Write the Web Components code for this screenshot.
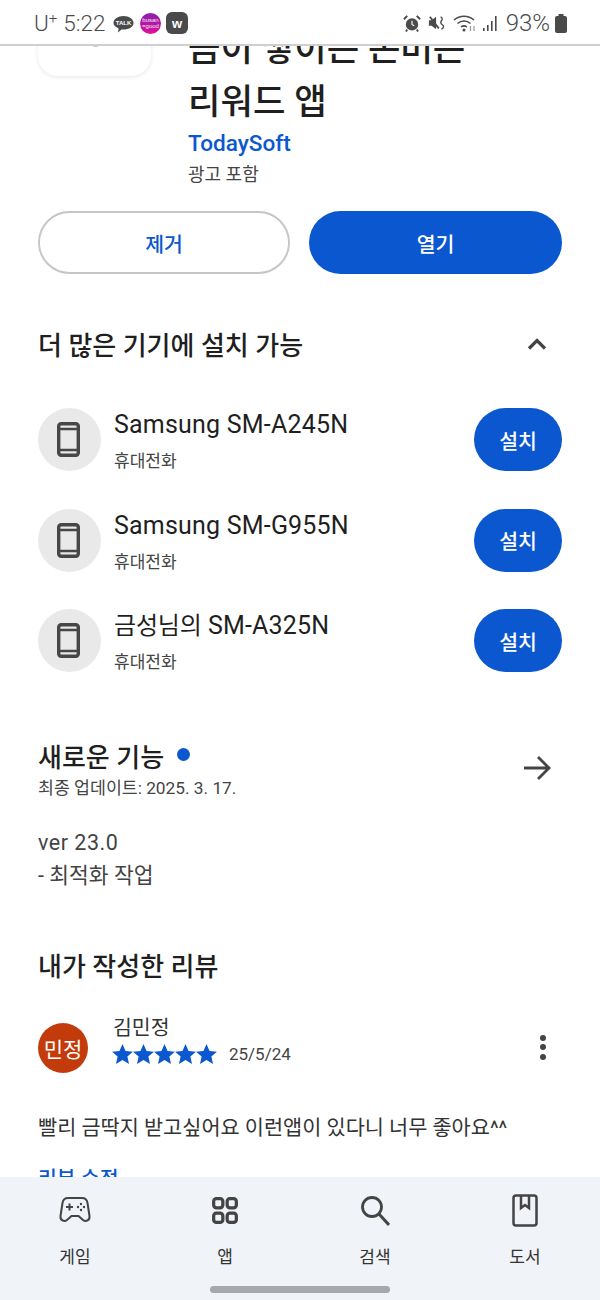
<!DOCTYPE html>
<html lang="ko">
<head>
<meta charset="utf-8">
<title>TodaySoft</title>
<style>
html, body { margin: 0; padding: 0; background: #fff; }
body { width: 600px; height: 1300px; overflow: hidden; font-family: Roboto, "Noto Sans CJK KR", sans-serif; color: #1f1f1f; }
</style>
</head>
<body>
<play-page></play-page>
<script>
const FONT = 'Roboto, "Noto Sans CJK KR", sans-serif';

class StatusBar extends HTMLElement {
    constructor(){
        super();
        this.attachShadow({mode:'open'});
        this.shadowRoot.innerHTML = `
<style>
:host { display: flex; align-items: center; padding: 2px 33px 0 34px; box-sizing: border-box; height: 46px; background: #fff; border-bottom: 2px solid #cfcfcf; font-family: ${FONT}; color: #4a4a4a; font-size: 22.5px; font-weight: 300; position: relative; z-index: 3; }
.left { display: flex; align-items: center; }
.time { margin-left: 6px; margin-right: 8px; }
.u sup { font-size: 15px; line-height: 0; vertical-align: 8px; }
.space { flex: 1; }
.right { display: flex; align-items: center; }
.pct { font-size: 24px; margin-left: 8px; margin-right: 5px; }
svg { display: block; }
.talk { font: 700 6px "Liberation Sans", sans-serif; }
</style>
<div class="left">
  <span class="u">U<sup>+</sup></span><span class="time">5:22</span>
  <svg width="21" height="21" viewBox="0 0 21 21"><path d="M10.500 3C16 3 20.500 6 20.500 10C20.500 14 16 16.500 10.500 16.500C9.800 16.500 9.200 16.500 8.600 16.400L5 19.500L5.600 15.400C2.500 14.200 .5 12.300 .5 10C.5 6 5 3 10.500 3Z" fill="#4a4a4a"/><text x="10.500" y="12.400" text-anchor="middle" fill="#fff" class="talk">TALK</text></svg>
  <svg width="21" height="21" viewBox="0 0 21 21" style="margin-left:6px"><defs><linearGradient id="g" x1="0" y1="0" x2="0" y2="1"><stop offset="0" stop-color="#8a1fb0"/><stop offset="1" stop-color="#e0109a"/></linearGradient></defs><circle cx="10.500" cy="10.500" r="10.500" fill="url(#g)"/><text x="10.500" y="9" text-anchor="middle" fill="#eee" font-size="6" font-family="Liberation Sans">busan</text><text x="10.500" y="15" text-anchor="middle" fill="#eee" font-size="6" font-family="Liberation Sans">=good</text></svg>
  <svg width="22" height="22" viewBox="0 0 22 22" style="margin-left:5px"><rect width="22" height="22" rx="6" fill="#4a4a4a"/><text x="11" y="15.500" text-anchor="middle" fill="#fff" font-size="13" font-weight="700" font-family="Liberation Sans">w</text></svg>
</div>
<div class="space"></div>
<div class="right">
  <svg width="18" height="19" viewBox="0 0 19 19"><circle cx="9.500" cy="10.500" r="6.500" fill="#4a4a4a"/><path d="M9.500 6.500V10.500L12 12" stroke="#fff" stroke-width="1.200" fill="none"/><path d="M1 5L4.500 1.500M18 5L14.500 1.500M4.500 16L3 18M14.500 16L16 18" stroke="#4a4a4a" stroke-width="2"/></svg>
  <svg width="18" height="18" viewBox="0 0 20 20" style="margin-left:7px"><path d="M1 7H4L9 3V17L4 13H1Z" fill="#4a4a4a"/><path d="M2 3L12 16" stroke="#4a4a4a" stroke-width="2"/><path d="M14 3Q17 5 15 7.500T16 12T15 17" fill="none" stroke="#4a4a4a" stroke-width="1.500"/></svg>
  <svg width="24" height="20" viewBox="0 0 24 20" style="margin-left:7px"><path d="M1 7A15 15 0 0 1 21 7M4.500 10.500A10 10 0 0 1 17.500 10.500M8 14A5 5 0 0 1 14 14" fill="none" stroke="#4a4a4a" stroke-width="1.500"/><circle cx="11" cy="17" r="1.500" fill="#4a4a4a"/><path d="M17.500 13V18M21 18V13" stroke="#999" stroke-width="1.200"/></svg>
  <svg width="16" height="18" viewBox="0 0 16 18" style="margin-left:5px"><rect x="1" y="14" width="1.600" height="3" fill="#4a4a4a"/><rect x="5" y="11" width="1.600" height="6" fill="#4a4a4a"/><rect x="9" y="7" width="1.600" height="10" fill="#4a4a4a"/><rect x="13" y="2" width="1.600" height="15" fill="#4a4a4a"/></svg>
  <span class="pct">93%</span>
  <svg width="12" height="19" viewBox="0 0 12 19"><rect x="3.500" y="0" width="5" height="3" fill="#4a4a4a"/><rect x="0" y="2" width="12" height="17" rx="2" fill="#4a4a4a"/></svg>
</div>`;
    }
}

class AppHeader extends HTMLElement {
    constructor(){
        super();
        this.attachShadow({mode:'open'});
        this.shadowRoot.innerHTML = `
<style>
:host { display: flex; gap: 37px; padding-left: 38px; height: 143px; font-family: ${FONT}; }
.icon { width: 113px; height: 113px; margin-top: -83px; flex: none; border-radius: 20px; background: #fff; box-shadow: 0 1px 4px rgba(0,0,0,.1); position: relative; }
.icon i { position: absolute; left: 54px; top: 81px; width: 7px; height: 3px; background: #d8c8a0; border-radius: 0 0 3px 3px; }
.info { display: flex; flex-direction: column; margin-top: -23px; }
h1 { margin: 0; font-size: 35.3px; line-height: 53px; font-weight: 500; color: #1f1f1f; }
a { margin-top: -1px; color: #0b57cf; font-size: 22.6px; line-height: 32px; font-weight: 500; }
small { font-size: 18px; line-height: 24px; color: #444; margin-top: 3px; }
</style>
<div class="icon"><i></i></div>
<div class="info">
  <h1>금이 쌓이는 돈버는<br>리워드 앱</h1>
  <a>TodaySoft</a>
  <small>광고 포함</small>
</div>`;
    }
}

class PillButton extends HTMLElement {
    constructor(){
        super();
        this.attachShadow({mode:'open'});
        this.shadowRoot.innerHTML = `
<style>
:host { display: flex; align-items: center; justify-content: center; box-sizing: border-box; height: 63px; border-radius: 32px; background: #0b57cf; color: #fff; font-family: ${FONT}; font-size: 20.5px; font-weight: 500; }
:host([outline]) { background: #fff; color: #0b57cf; border: 2px solid #c4c7c5; }
</style>
<slot></slot>`;
    }
}

class SectionHead extends HTMLElement {
    constructor(){
        super();
        this.attachShadow({mode:'open'});
        this.shadowRoot.innerHTML = `
<style>
:host { display: block; font-family: ${FONT}; font-size: 26px; line-height: 36px; font-weight: 500; color: #1f1f1f; }
</style>
<slot></slot>`;
    }
}

class DeviceRow extends HTMLElement {
    constructor(){
        super();
        this.attachShadow({mode:'open'});
        this.shadowRoot.innerHTML = `
<style>
:host { display: flex; align-items: center; height: 63px; font-family: ${FONT}; }
.pic { width: 63px; height: 63px; border-radius: 50%; background: #e9e9e9; display: flex; align-items: center; justify-content: center; flex: none; }
.txt { flex: 1; margin-left: 13px; display: flex; flex-direction: column; padding-top: 2px; }
.name { font-size: 25px; line-height: 34px; color: #1f1f1f; letter-spacing: .2px; }
.kind { font-size: 17px; line-height: 24px; color: #444; margin-top: 7px; }
pill-button { width: 88px; }
</style>
<div class="pic"><svg width="23" height="35" viewBox="0 0 23 35" style="margin-right:2px"><rect x="1.700" y="1.700" width="19.600" height="31.600" rx="2.500" fill="none" stroke="#474747" stroke-width="3.400"/><path d="M2 7H21M2 28H21" stroke="#474747" stroke-width="2.500"/></svg></div>
<div class="txt"><span class="name"><slot></slot></span><span class="kind">휴대전화</span></div>
<pill-button>설치</pill-button>`;
    }
}

class ReviewBlock extends HTMLElement {
    constructor(){
        super();
        this.attachShadow({mode:'open'});
        const star = '<svg width="21" height="20" viewBox="0 0 24 23"><path d="M12 0L15.500 8L24 8.800L17.600 14.500L19.500 23L12 18.500L4.500 23L6.400 14.500L0 8.800L8.500 8Z" fill="#0b57cf"/></svg>';
        this.shadowRoot.innerHTML = `
<style>
:host { display: flex; flex-direction: column; font-family: ${FONT}; }
.top { display: flex; align-items: center; height: 62px; }
.av { width: 50px; height: 50px; border-radius: 50%; background: #c33b0a; color: #fff; font-size: 21px; display: flex; align-items: center; justify-content: center; flex: none; margin-top: 12px; }
.who { margin-left: 25px; flex: 1; }
.name { font-size: 20.5px; line-height: 24px; color: #333; }
.line { display: flex; align-items: center; height: 28px; margin-left: -1px; }
.stars { display: flex; }
.date { margin-left: 12px; font-size: 17px; color: #444; }
.more { margin-right: 16px; display: flex; flex-direction: column; gap: 3.500px; margin-top: 10px; }
.more i { width: 6px; height: 6px; border-radius: 50%; background: #444; }
p { margin: 41px 0 0; font-size: 20.800px; line-height: 28px; color: #333; }
a { display: block; margin-top: 20px; color: #0b57cf; font-size: 20.500px; font-weight: 500; }
</style>
<div class="top">
  <div class="av">민정</div>
  <div class="who"><div class="name">김민정</div><div class="line"><div class="stars">${star.repeat(5)}</div><span class="date">25/5/24</span></div></div>
  <div class="more"><i></i><i></i><i></i></div>
</div>
<p>빨리 금딱지 받고싶어요 이런앱이 있다니 너무 좋아요^^</p>
<a>리뷰 수정</a>`;
    }
}

class NavItem extends HTMLElement {
    constructor(){
        super();
        this.attachShadow({mode:'open'});
        this.shadowRoot.innerHTML = `
<style>
:host { display: flex; flex-direction: column; align-items: center; font-family: ${FONT}; font-size: 17px; color: #333; }
.ic { height: 46px; display: flex; align-items: center; justify-content: center; }
span { margin-top: 12px; line-height: 24px; }
</style>
<div class="ic"><slot></slot></div><span></span>`;
        this.shadowRoot.querySelector('span').textContent = this.getAttribute('label');
    }
}

class BottomNav extends HTMLElement {
    constructor(){
        super();
        this.attachShadow({mode:'open'});
        this.shadowRoot.innerHTML = `
<style>
:host { display: block; position: absolute; left: 0; right: 0; bottom: 0; height: 123px; background: #f0f3f8; }
.row { display: grid; grid-template-columns: repeat(4, 150px); padding-top: 10px; }
.bar { position: absolute; left: 210px; top: 109px; width: 180px; height: 7px; border-radius: 4px; background: #a6a8ab; }
</style>
<div class="row"><slot></slot></div><div class="bar"></div>`;
    }
}

class PlayPage extends HTMLElement {
    constructor(){
        super();
        this.attachShadow({mode:'open'});
        this.shadowRoot.innerHTML = `
<style>
:host { display: block; position: relative; width: 600px; height: 1300px; overflow: hidden; background: #fff; font-family: ${FONT}; }
main { padding: 0 38px; }
.btns { display: grid; grid-template-columns: 252px 253px; gap: 19px; margin-top: 22px; }
.sec { display: flex; align-items: center; justify-content: space-between; }
.devhead { margin-top: 54px; }
.devices { display: flex; flex-direction: column; gap: 37.500px; margin-top: 44px; }
.new { margin-top: 68px; display: flex; justify-content: space-between; align-items: center; }
.dot { display: inline-block; width: 13px; height: 13px; border-radius: 50%; background: #0b57cf; margin-left: 13px; vertical-align: 6px; }
.date { font-size: 17.300px; line-height: 24px; color: #444; }
.notes { margin-top: 26px; font-size: 21.500px; line-height: 33px; color: #444; }
.notes span { letter-spacing: .5px; }
.rev { margin-top: 57px; }
review-block { margin-top: 26px; }
</style>
<status-bar></status-bar>
<app-header></app-header>
<main>
  <div class="btns"><pill-button outline>제거</pill-button><pill-button>열기</pill-button></div>
  <div class="sec devhead"><section-head>더 많은 기기에 설치 가능</section-head>
    <svg width="24" height="24" viewBox="0 0 24 24" style="margin:-4px 13px 0 0"><path d="M4 16.500L12 8.500L20 16.500" fill="none" stroke="#444" stroke-width="3.200"/></svg></div>
  <div class="devices">
    <device-row>Samsung SM-A245N</device-row>
    <device-row>Samsung SM-G955N</device-row>
    <device-row><span style="font-size:24px;letter-spacing:-.2px">금성님의</span> SM-A325N</device-row>
  </div>
  <div class="new"><div><section-head>새로운 기능<span class="dot"></span></section-head><div class="date">최종 업데이트: 2025. 3. 17.</div></div>
    <svg width="30" height="30" viewBox="0 0 30 30" style="margin:-4px 10px 0 0"><path d="M2 15H27M16 4L27 15L16 26" fill="none" stroke="#444" stroke-width="2.800"/></svg></div>
  <div class="notes"><span>ver 23.0</span><br>- 최적화 작업</div>
  <section-head class="rev">내가 작성한 리뷰</section-head>
  <review-block></review-block>
</main>
<bottom-nav>
  <nav-item label="게임"><svg width="32" height="28" viewBox="0 0 32 28"><path d="M9 2H23C26 2 28 4 28.500 7L30.500 20C31 24 27 26.500 24 24L19.500 20H12.500L8 24C5 26.500 1 24 1.500 20L3.500 7C4 4 6 2 9 2Z" fill="none" stroke="#444" stroke-width="2"/><path d="M7 11H14M10.500 7.500V14.500" stroke="#444" stroke-width="2"/><circle cx="22" cy="8" r="1.200" fill="#444"/><circle cx="22" cy="14" r="1.200" fill="#444"/><circle cx="19" cy="11" r="1.200" fill="#444"/><circle cx="25" cy="11" r="1.200" fill="#444"/></svg></nav-item>
  <nav-item label="앱"><svg width="26" height="27" viewBox="0 0 24 25"><rect x="1.500" y="1.500" width="8.500" height="8.500" rx="2.500" fill="none" stroke="#444" stroke-width="3"/><rect x="14" y="1.500" width="8.500" height="8.500" rx="2.500" fill="none" stroke="#444" stroke-width="3"/><rect x="1.500" y="15" width="8.500" height="8.500" rx="2.500" fill="none" stroke="#444" stroke-width="3"/><rect x="14" y="15" width="8.500" height="8.500" rx="2.500" fill="none" stroke="#444" stroke-width="3"/></svg></nav-item>
  <nav-item label="검색"><svg width="30" height="31" viewBox="0 0 30 31"><circle cx="12" cy="12" r="9.500" fill="none" stroke="#444" stroke-width="2.800"/><path d="M19 19L29 30" stroke="#444" stroke-width="3"/></svg></nav-item>
  <nav-item label="도서"><svg width="26" height="33" viewBox="0 0 26 33"><path d="M4 1.500H22C23.500 1.500 24.500 2.500 24.500 4V29C24.500 30.500 23.500 31.500 22 31.500H4C2.500 31.500 1.500 30.500 1.500 29V4C1.500 2.500 2.500 1.500 4 1.500Z" fill="none" stroke="#444" stroke-width="2.500"/><path d="M9 2V14L13 11L17 14V2" fill="none" stroke="#444" stroke-width="2.500"/></svg></nav-item>
</bottom-nav>`;
    }
}

customElements.define('status-bar', StatusBar);
customElements.define('app-header', AppHeader);
customElements.define('pill-button', PillButton);
customElements.define('section-head', SectionHead);
customElements.define('device-row', DeviceRow);
customElements.define('review-block', ReviewBlock);
customElements.define('nav-item', NavItem);
customElements.define('bottom-nav', BottomNav);
customElements.define('play-page', PlayPage);
</script>
</body>
</html>
